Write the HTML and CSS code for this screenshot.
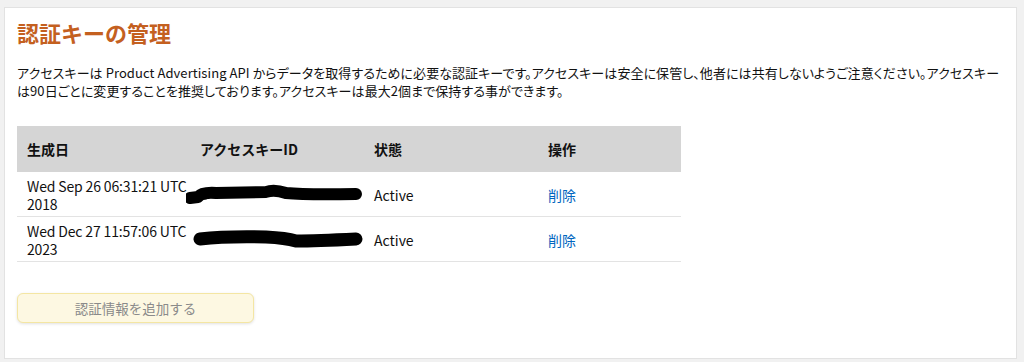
FILE: index.html
```html
<!DOCTYPE html>
<html lang="ja">

<head>
    <meta charset="UTF-8">
    <meta name="viewport" content="width=device-width, initial-scale=1.0">
    <title>認証キーの管理</title>
    <link rel="stylesheet" href="styles.css">
</head>

<body>
    <div class="card">
        <h1 class="title">認証キーの管理</h1>
        <p class="desc">アクセスキーは Product Advertising API からデータを取得するために必要な認証キーです。アクセスキーは安全に保管し、他者には共有しないようご注意ください。アクセスキーは90日ごとに変更することを推奨しております。アクセスキーは最大2個まで保持する事ができます。</p>

        <table class="keys">
            <thead>
                <tr>
                    <th class="c1">生成日</th>
                    <th class="c2">アクセスキーID</th>
                    <th class="c3">状態</th>
                    <th class="c4">操作</th>
                </tr>
            </thead>
            <tbody>
                <tr>
                    <td class="date">Wed Sep 26 06:31:21 UTC 2018</td>
                    <td class="keyid">
                        <svg class="mask" width="180" height="20" viewBox="0 0 180 20">
                            <path d="M4 14 L12 13 Q16 8 30 9 L80 8 Q88 5 100 9 Q120 11 170 10" fill="none" stroke="#000" stroke-width="12" stroke-linecap="round" stroke-linejoin="round" />
                            <path d="M-5 16 L20 14" fill="none" stroke="#000" stroke-width="3" stroke-linecap="round" />
                        </svg>
                    </td>
                    <td>Active</td>
                    <td><a class="del" href="#">削除</a></td>
                </tr>
                <tr>
                    <td class="date">Wed Dec 27 11:57:06 UTC 2023</td>
                    <td class="keyid">
                        <svg class="mask" width="180" height="20" viewBox="0 0 180 20">
                            <path d="M14 10 Q40 7 80 8 Q100 9 110 12 Q130 12 170 10" fill="none" stroke="#000" stroke-width="13" stroke-linecap="round" stroke-linejoin="round" />
                        </svg>
                    </td>
                    <td>Active</td>
                    <td><a class="del" href="#">削除</a></td>
                </tr>
            </tbody>
        </table>

        <button class="add">認証情報を追加する</button>
    </div>
</body>

</html>
```
FILE: styles.css
```css
html,
body {
    margin: 0;
    padding: 0;
    background-color: #f1f1f1;
    color: #111;
    font-family: "Noto Sans CJK JP", "Noto Sans", sans-serif;
    font-size: 13px;
}

body {
    padding: 7px 7px 3px 4px;
    box-sizing: border-box;
}

.card {
    background-color: #fff;
    border: solid 1px #e2e2e2;
    height: 352px;
    box-sizing: border-box;
    padding: 9px 12px 0 12px;
}

.title {
    margin: 0;
    color: #c4601f;
    font-size: 22px;
    font-weight: bold;
    line-height: 30px;
}

.desc {
    margin: 17px 0 0 0;
    line-height: 18px;
    font-size: 13px;
    color: #111;
    font-feature-settings: "palt";
    letter-spacing: 0.07px;
}

.keys {
    margin-top: 26px;
    border-collapse: collapse;
    width: 664px;
    table-layout: fixed;
    font-size: 14px;
}

.keys th {
    background-color: #d5d5d5;
    height: 46px;
    text-align: left;
    font-weight: bold;
    padding: 0 10px;
}

.keys .c1 { width: 153px; }
.keys .c2 { width: 154px; }
.keys .c3 { width: 154px; }
.keys .c4 { width: 123px; }

.keys td {
    padding: 5px 10px 3px 10px;
    line-height: 18px;
    border-bottom: solid 1px #e3e3e3;
    vertical-align: middle;
}

.keys td.date {
    padding-right: 0;
    letter-spacing: -0.15px;
}

.keys td.keyid {
    padding: 0;
}

.mask {
    display: block;
    margin-left: -4px;
}

.del {
    color: #0066c0;
    text-decoration: none;
}

.add {
    display: block;
    margin-top: 31px;
    width: 237px;
    height: 30px;
    background-color: #fdf8e2;
    border: solid 1px #f4e6a3;
    border-radius: 6px;
    box-shadow: 0 1px 3px rgba(0, 0, 0, 0.12);
    color: #8a8a8a;
    font-family: "Noto Sans CJK JP", "Noto Sans", sans-serif;
    font-size: 13.5px;
    outline: none;
}
```
